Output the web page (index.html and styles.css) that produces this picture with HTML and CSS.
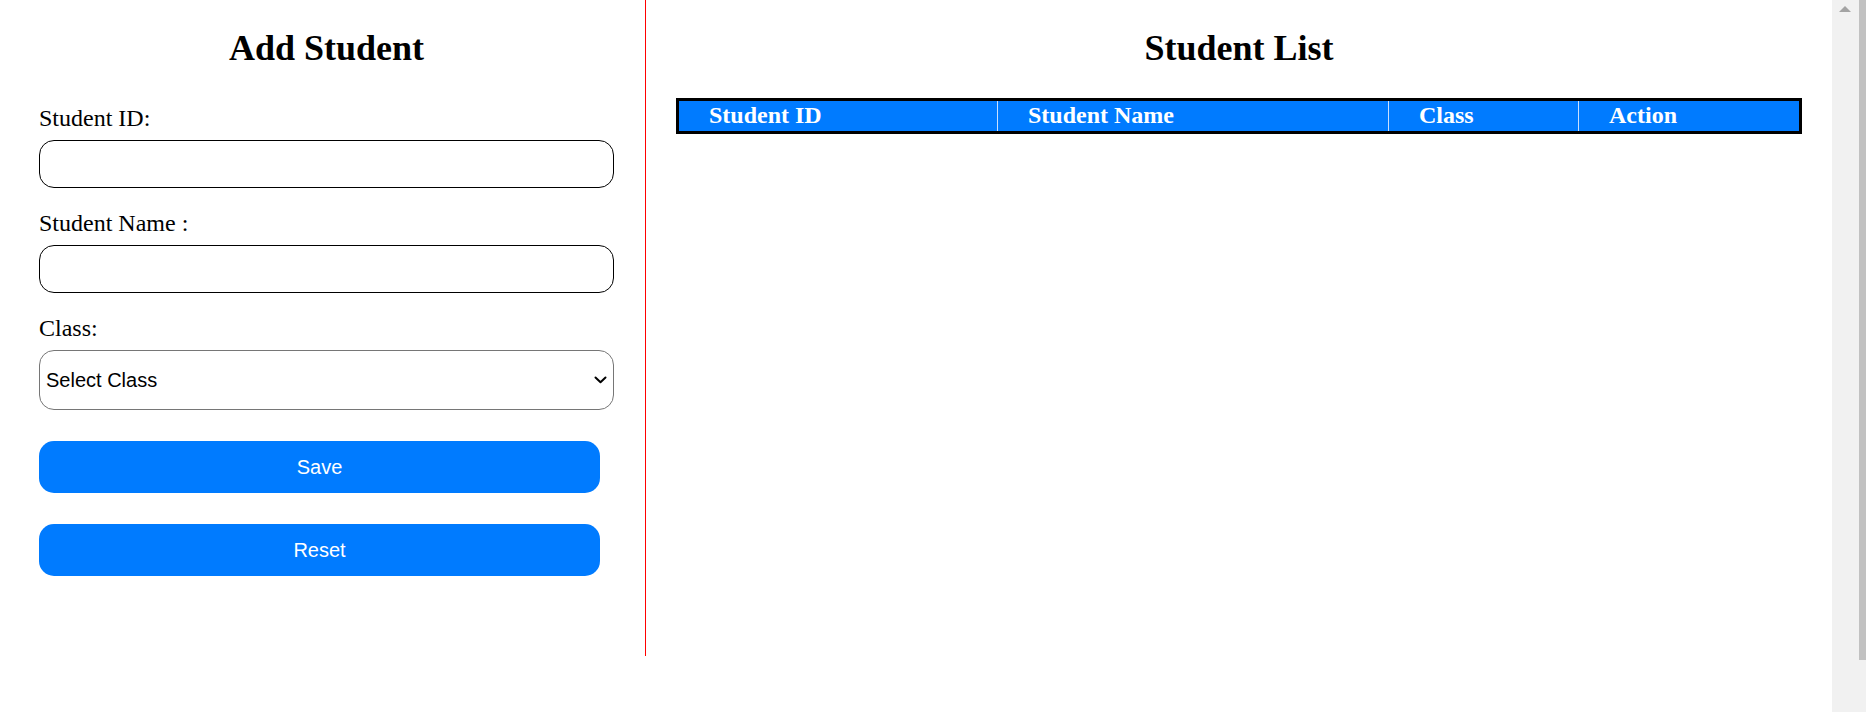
FILE: index.html
```html
<!DOCTYPE html>
<html lang="en">
<head>
<meta charset="utf-8">
<title>Students</title>
<link rel="stylesheet" href="styles.css">
</head>
<body>
<div class="app">
  <section class="left">
    <h2 class="title">Add Student</h2>
    <form class="form">
      <label class="label" for="sid">Student ID:</label>
      <input class="field" id="sid" type="text">
      <label class="label" for="sname">Student Name :</label>
      <input class="field" id="sname" type="text">
      <label class="label" for="sclass">Class:</label>
      <div class="select-wrap">
        <select class="select" id="sclass">
          <option>Select Class</option>
        </select>
        <svg class="chev" width="13" height="8" viewBox="0 0 13 8" aria-hidden="true">
          <path d="M1.5 1.5 L6.5 6.2 L11.5 1.5" fill="none" stroke="#000" stroke-width="2" stroke-linecap="round" stroke-linejoin="round"/>
        </svg>
      </div>
      <button class="btn btn-save" type="button">Save</button>
      <button class="btn btn-reset" type="reset">Reset</button>
    </form>
  </section>
  <section class="right">
    <h2 class="title">Student List</h2>
    <table class="list">
      <thead>
        <tr>
          <th class="c1">Student ID</th>
          <th class="c2">Student Name</th>
          <th class="c3">Class</th>
          <th class="c4">Action</th>
        </tr>
      </thead>
      <tbody></tbody>
    </table>
  </section>
</div>
<div class="scrollbar">
  <div class="arrow"></div>
  <div class="thumb"></div>
</div>
</body>
</html>
```

FILE: styles.css
```css
html, body {
  margin: 0;
  padding: 0;
  background: #fff;
}
body {
  font-family: "Liberation Serif", "Times New Roman", serif;
  color: #000;
}
.app {
  display: flex;
  align-items: flex-start;
  margin-right: 34px;
}
.left {
  box-sizing: border-box;
  width: 647px;
  height: 656px;
  padding: 0 31px 0 39px;
  border-right: 1px solid #ff0000;
}
.right {
  flex: 1;
  padding: 0 30px 0 30px;
}
.title {
  margin: 28px 0 30px;
  font-size: 36px;
  line-height: 40px;
  font-weight: bold;
  text-align: center;
}
.left .title {
  margin-bottom: 36px;
}
.form {
  display: flex;
  flex-direction: column;
  align-items: flex-start;
}
.label {
  display: block;
  font-size: 24px;
  line-height: 28px;
  margin-bottom: 8px;
}
.field {
  box-sizing: border-box;
  width: 100%;
  height: 48px;
  margin: 0 0 21px;
  border: 1px solid #000;
  border-radius: 15px;
  padding: 0 12px;
  font-family: "Liberation Sans", Arial, sans-serif;
  font-size: 20px;
  background: #fff;
  outline: none;
}
.select-wrap {
  position: relative;
  width: 100%;
}
.select {
  -webkit-appearance: none;
  appearance: none;
  box-sizing: border-box;
  display: block;
  width: 100%;
  height: 60px;
  margin: 0;
  border: 1px solid #767676;
  border-radius: 15px;
  padding: 0 30px 0 6px;
  font-family: "Liberation Sans", Arial, sans-serif;
  font-size: 20px;
  color: #000;
  background: #fff;
}
.chev {
  position: absolute;
  right: 7px;
  top: 26px;
  pointer-events: none;
}
.btn {
  box-sizing: border-box;
  width: 561px;
  height: 52px;
  margin-top: 31px;
  border: none;
  border-radius: 15px;
  background: #007bff;
  color: #fff;
  font-family: "Liberation Sans", Arial, sans-serif;
  font-size: 20px;
  cursor: pointer;
}
.list {
  width: 100%;
  table-layout: fixed;
  border-collapse: separate;
  border-spacing: 0;
  border: 3px solid #000;
  background: #007bff;
}
.list th {
  box-sizing: border-box;
  padding: 0 10px 2px 30px;
  line-height: 28px;
  font-size: 24px;
  font-weight: bold;
  color: #fff;
  text-align: left;
  white-space: nowrap;
}
.list th + th {
  border-left: 1px solid #c9e0ff;
}
.c1 { width: 318px; }
.c2 { width: 391px; }
.c3 { width: 190px; }
.c4 { width: 221px; }
.scrollbar {
  position: fixed;
  top: 0;
  right: 0;
  width: 34px;
  height: 100%;
  background: #f1f1f1;
}
.arrow {
  position: absolute;
  left: 7px;
  top: 6px;
  width: 0;
  height: 0;
  border-left: 6px solid transparent;
  border-right: 6px solid transparent;
  border-bottom: 6px solid #a3a3a3;
}
.thumb {
  position: absolute;
  right: 0;
  top: 0;
  width: 7px;
  height: 660px;
  background: #c1c1c1;
}
```
